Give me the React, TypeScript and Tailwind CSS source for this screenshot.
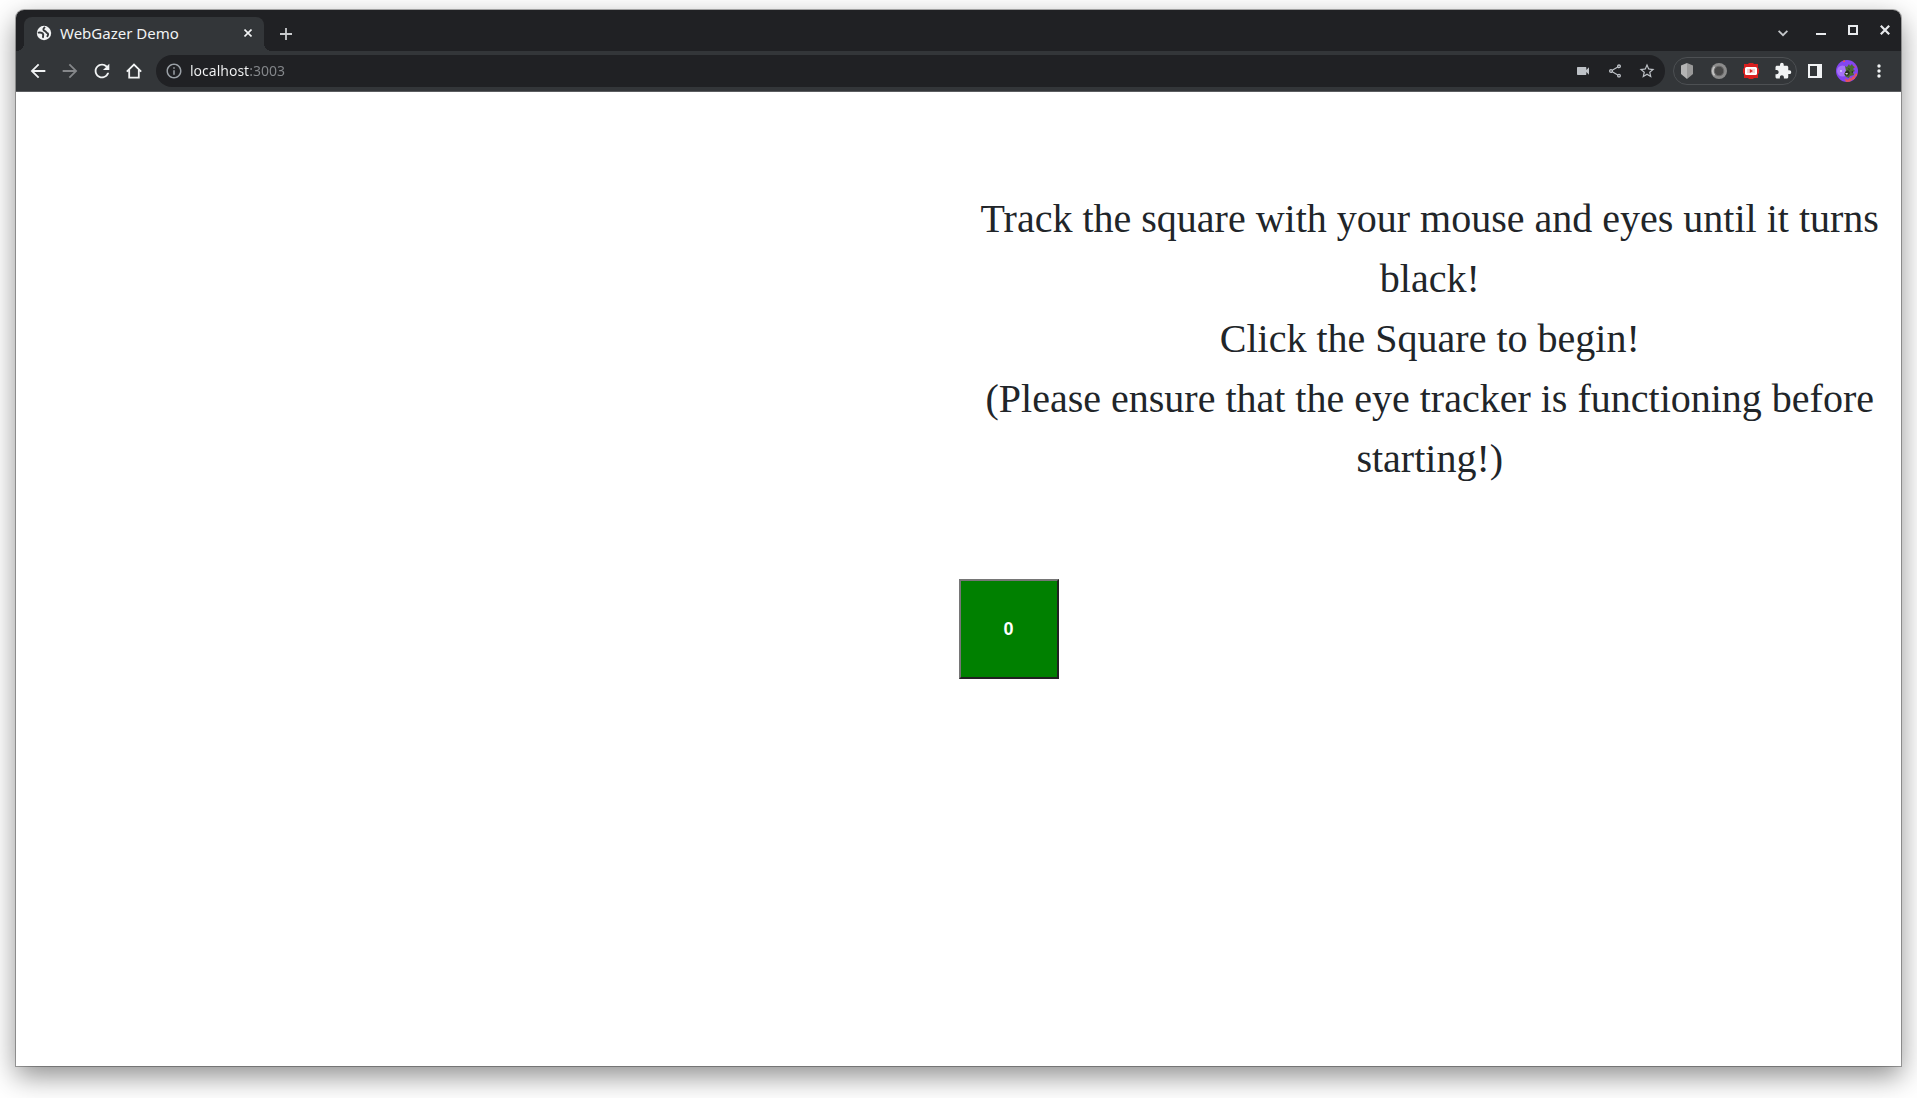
import type { ReactNode } from "react";
import {
  MdArrowBack,
  MdArrowForward,
  MdRefresh,
  MdInfoOutline,
  MdVideocam,
  MdOutlineShare,
  MdStarBorder,
  MdExtension,
} from "react-icons/md";

function IconButton({ label, children }: { label: string; children: ReactNode }) {
  return (
    <button aria-label={label} className="flex h-7 w-8 shrink-0 items-center justify-center">
      {children}
    </button>
  );
}

function TabStrip() {
  return (
    <div className="flex h-[41px] items-stretch bg-[#202124] pl-2">
      <div className="relative mt-[7px] flex w-60 items-center rounded-t-lg bg-[#333639] pr-2 pb-0.5 pl-3 text-[#f1f3f4]">
        <span className="absolute bottom-0 -left-2 size-2 bg-[radial-gradient(circle_at_0_0,transparent_8px,#333639_8px)]" />
        <span className="absolute -right-2 bottom-0 size-2 bg-[radial-gradient(circle_at_100%_0,transparent_8px,#333639_8px)]" />
        <svg viewBox="0 0 16 16" className="size-4">
          <circle cx="8" cy="8" r="7.200" fill="#f1f3f4" />
          <path
            d="M2.600 7.600C5 7.400 6.800 8 7.200 9.600c.3 1.100-.4 1.400-.2 2.600M8.500 2.600C6.600 4 7.400 5.400 8.600 5.900c1.600.6 1.200 1.700 2.400 2.100 1.400.4 1.500 1.500.4 3.200"
            fill="none"
            stroke="#333639"
            strokeWidth="1.900"
            strokeLinecap="round"
            strokeLinejoin="round"
          />
        </svg>
        <h1 className="ml-2 flex-1 text-[15px] leading-5">WebGazer Demo</h1>
        <button aria-label="Close tab" className="flex size-4 items-center justify-center">
          <svg viewBox="0 0 8 8" className="size-2" stroke="currentColor" strokeWidth="1.6">
            <path d="M.5.5l7 7M7.500.5l-7 7" />
          </svg>
        </button>
      </div>
      <button aria-label="New tab" className="mt-[7px] ml-2 flex w-7 items-center justify-center text-[#c9cbce]">
        <svg viewBox="0 0 12 12" className="size-3" stroke="currentColor" strokeWidth="1.8">
          <path d="M6 0v12M0 6h12" />
        </svg>
      </button>
      <div className="ml-auto flex h-10 items-center text-[#e8eaed]">
        <button aria-label="Search tabs" className="mr-1.5 flex h-10 w-8 items-center justify-center pt-[7px] text-[#c4c7ca]">
          <svg viewBox="0 0 10 7" className="h-[7px] w-2.5" fill="none" stroke="currentColor" strokeWidth="1.8">
            <path d="M.6.8L5 5.200 9.400.8" />
          </svg>
        </button>
        <button aria-label="Minimize" className="flex h-10 w-8 items-center justify-center pt-[7px]">
          <span className="h-0.5 w-2.5 bg-current" />
        </button>
        <button aria-label="Maximize" className="flex h-10 w-8 items-center justify-center">
          <span className="size-2.5 border-2 border-current" />
        </button>
        <button aria-label="Close window" className="flex h-10 w-8 items-center justify-center">
          <svg viewBox="0 0 10 10" className="size-2.5" stroke="currentColor" strokeWidth="2.2">
            <path d="M.8.8l8.400 8.400M9.200.8L.8 9.200" />
          </svg>
        </button>
      </div>
    </div>
  );
}

function Toolbar() {
  return (
    <div className="flex h-[41px] items-center border-b border-[#5b5d60] bg-[#333639] px-1.5 text-[#f1f3f4]">
      <IconButton label="Back">
        <MdArrowBack size={22} />
      </IconButton>
      <IconButton label="Forward">
        <MdArrowForward size={22} className="text-[#85878a]" />
      </IconButton>
      <IconButton label="Reload">
        <MdRefresh size={22} />
      </IconButton>
      <IconButton label="Home">
        <svg viewBox="0 0 16 16" className="size-4" fill="none" stroke="currentColor" strokeWidth="1.8">
          <path d="M.8 8.600L8 1.600l7.200 7M3.200 7v7.600h9.600V7" />
        </svg>
      </IconButton>
      <div className="ml-1.5 flex h-8 flex-1 items-center rounded-full bg-[#202124] pr-0.5 pl-[9px] text-[#bdc1c6]">
        <button aria-label="Site information" className="text-[#9aa0a6]">
          <MdInfoOutline size={18} />
        </button>
        <input
          aria-label="Address"
          defaultValue="localhost:3003"
          className="ml-[7px] min-w-0 flex-1 bg-[linear-gradient(90deg,#f4f5f6_60px,#85888c_60px)] bg-clip-text text-[14px] leading-5 text-transparent outline-none"
        />
        <IconButton label="Camera">
          <MdVideocam size={16} />
        </IconButton>
        <IconButton label="Share">
          <MdOutlineShare size={16} />
        </IconButton>
        <IconButton label="Bookmark">
          <MdStarBorder size={18} />
        </IconButton>
      </div>
      <div className="ml-2 flex h-7 w-[124px] items-center justify-center rounded-full border border-[#4d5053]">
        <IconButton label="Shield">
          <svg viewBox="0 0 12 16" className="h-4 w-3">
            <path d="M6 0L0 2.500V11l6 5z" fill="#b4b4b4" />
            <path d="M6 0l6 2.500V11l-6 5z" fill="#999" />
          </svg>
        </IconButton>
        <IconButton label="Recorder">
          <svg viewBox="0 0 16 16" className="size-4">
            <circle cx="8" cy="8" r="8" fill="#8c8c8c" />
            <path d="M3 3a7 7 0 0 0 0 10l2-3V6z" fill="#c4c4c4" />
            <circle cx="8" cy="8" r="4.800" fill="#484848" stroke="#6a6a6a" />
          </svg>
        </IconButton>
        <IconButton label="Video enhancer">
          <svg viewBox="0 0 16 16" className="size-4">
            <path d="M1 1h4l1-1h4l1 1h4v4l1 1v4l-1 1v4h-4l-1 1H6l-1-1H1v-4l-1-1V6l1-1z" fill="#d81f1f" />
            <rect x="2" y="4" width="12" height="8" rx="1.500" fill="#fff" />
            <rect x="4" y="5.800" width="8" height="4.400" fill="#f3d0d0" />
            <path d="M6.800 6v4L10 8z" fill="#d81f1f" />
          </svg>
        </IconButton>
        <IconButton label="Extensions">
          <MdExtension size={18} />
        </IconButton>
      </div>
      <div className="ml-0.5 flex">
        <IconButton label="Side panel">
          <svg viewBox="0 0 14 14" className="size-3.5">
            <path fillRule="evenodd" d="M0 0h14v14H0zM2 2v10h7V2z" fill="currentColor" />
          </svg>
        </IconButton>
        <IconButton label="Profile">
          <svg viewBox="0 0 22 22" className="size-[22px] rounded-full">
            <rect width="22" height="22" fill="#8445f0" />
            <circle cx="6.500" cy="11" r="5.500" fill="#a673f7" />
            <circle cx="5" cy="11" r="1" fill="#d9c4ff" />
            <path d="M9 6l2 1 2-3 1 2 2-2 1 2 2 1-2 2 2 2-2 1 1 3-4 1-1 2-3-1-2-3 2-3z" fill="#4a6a30" />
            <path d="M9 12l3-2 2 3-2 3-3-1z" fill="#28301f" />
            <path d="M12 8l2 1-1 1zM15 12l2-1v2z" fill="#223018" />
            <path d="M9 13h3l-1 2z" fill="#d8cfe0" />
            <path
              d="M9 20l1-2 1 2 2-1 1-2 1 2 2-3 1 1 1-3 2-1v3l-2 1v2l-3 1-2 2h-4zM7 0h2v2H7zM18 5l2 2-1 1z"
              fill="#e5525c"
            />
          </svg>
        </IconButton>
        <IconButton label="Menu">
          <svg viewBox="0 0 4 14" className="h-3.5 w-1" fill="currentColor">
            <circle cx="2" cy="2" r="1.700" />
            <circle cx="2" cy="7" r="1.700" />
            <circle cx="2" cy="12" r="1.700" />
          </svg>
        </IconButton>
      </div>
    </div>
  );
}

export default function App() {
  return (
    <div className="flex min-h-screen flex-col overflow-hidden bg-white px-4 pt-2.5 pb-8 font-['Noto_Sans',sans-serif]">
      <div className="flex flex-1 flex-col rounded-t-lg shadow-[0_0_0_1px_rgba(0,0,0,0.3),0_10px_28px_rgba(0,0,0,0.45)]">
        <header className="overflow-hidden rounded-t-lg">
          <TabStrip />
          <Toolbar />
        </header>
        <main className="grid flex-1 grid-cols-2 grid-rows-2 bg-white">
          <p className="col-start-2 pt-[97px] text-center font-['Liberation_Serif',serif] text-[40px] leading-[60px] text-[#212529]">
            Track the square with your mouse and eyes until it turns black!
            <br />
            Click the Square to begin!
            <br />
            (Please ensure that the eye tracker is functioning before starting!)
          </p>
          <button className="col-start-2 size-[100px] border-2 border-t-[#767676] border-r-[#212121] border-b-[#212121] border-l-[#767676] bg-[#008000] font-['Liberation_Sans',sans-serif] text-lg font-bold text-white">
            0
          </button>
        </main>
      </div>
    </div>
  );
}
